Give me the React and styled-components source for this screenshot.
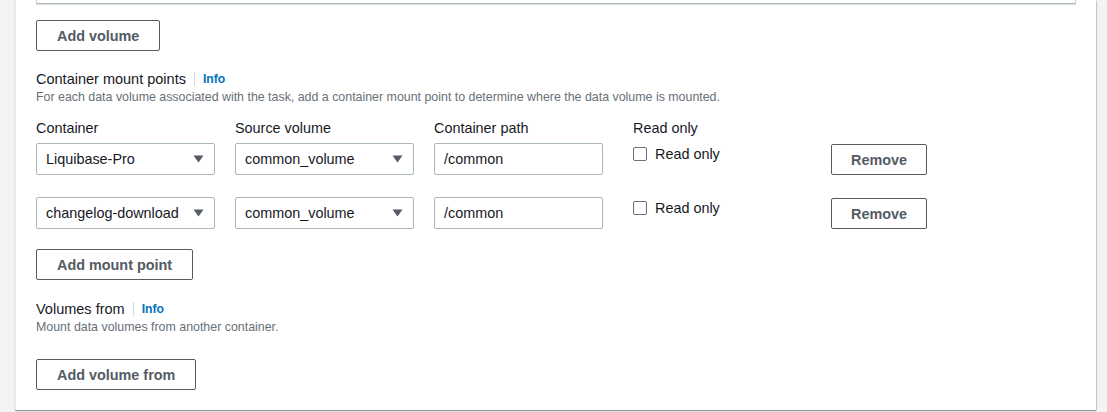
import styled, { createGlobalStyle } from "styled-components";

const GlobalStyle = createGlobalStyle`
    html, body {
        margin: 0;
        padding: 0;
        background: #f2f3f3;
        font-family: "Liberation Sans", Arial, sans-serif;
        color: #16191f;
    }
`;

const mounts = [
    { container: "Liquibase-Pro", volume: "common_volume", path: "/common" },
    { container: "changelog-download", volume: "common_volume", path: "/common" },
];

const Caret = () => (
    <svg width="11" height="8" viewBox="0 0 11 8">
        <path d="M0.5 0.5 L10.5 0.5 L5.5 7.5 Z" fill="#545b64" />
    </svg>
);

const Section = ({ title, description, top }) => (
    <Header $top={top}>
        <TitleLine>
            <Title>{title}</Title>
            <Divider />
            <Info>Info</Info>
        </TitleLine>
        <Description>{description}</Description>
    </Header>
);

const App = () => {
    return (
        <>
            <GlobalStyle />
            <Page>
                <Panel>
                    <PreviousBox />
                    <Button $top={16}>Add volume</Button>

                    <Section
                        top={18}
                        title="Container mount points"
                        description="For each data volume associated with the task, add a container mount point to determine where the data volume is mounted."
                    />

                    <LabelRow>
                        <FieldLabel>Container</FieldLabel>
                        <FieldLabel>Source volume</FieldLabel>
                        <FieldLabel>Container path</FieldLabel>
                        <FieldLabel>Read only</FieldLabel>
                    </LabelRow>

                    {mounts.map((m, i) => (
                        <MountRow key={i} $first={i === 0}>
                            <Select>
                                <span>{m.container}</span>
                                <Caret />
                            </Select>
                            <Select>
                                <span>{m.volume}</span>
                                <Caret />
                            </Select>
                            <Input>{m.path}</Input>
                            <CheckLabel>
                                <Box />
                                Read only
                            </CheckLabel>
                            <RemoveButton>Remove</RemoveButton>
                        </MountRow>
                    ))}

                    <Button $top={20}>Add mount point</Button>

                    <Section
                        top={19}
                        title="Volumes from"
                        description="Mount data volumes from another container."
                    />

                    <Button $top={23}>Add volume from</Button>
                </Panel>
            </Page>
        </>
    );
};

export default App;

const Page = styled.div`
    padding: 0 11px 1px 15px;
    width: 1107px;
    height: 412px;
    box-sizing: border-box;
`;

const Panel = styled.div`
    background: #fff;
    border-left: 1px solid #eaeded;
    padding: 0 20px 20px 20px;
    box-shadow: 0 1px 1px 0 rgba(0, 28, 36, 0.3), 1px 1px 1px 0 rgba(0, 28, 36, 0.15);
`;

const PreviousBox = styled.div`
    height: 3px;
    border: 1px solid #d5dbdb;
    border-top: none;
    border-bottom-color: #aab7b8;
    box-shadow: 0 1px 1px 0 rgba(0, 28, 36, 0.15);
`;

const Button = styled.button`
    display: block;
    margin-top: ${(p) => p.$top}px;
    height: 31px;
    padding: 0 20px;
    background: #fff;
    border: 1px solid #545b64;
    border-radius: 2px;
    color: #545b64;
    font-family: "Liberation Sans", Arial, sans-serif;
    font-size: 14.4px;
    font-weight: 700;
`;

const Header = styled.div`
    margin-top: ${(p) => p.$top}px;
`;

const TitleLine = styled.div`
    display: flex;
    align-items: center;
    height: 20px;
`;

const Title = styled.span`
    font-size: 14.5px;
    line-height: 20px;
    color: #16191f;
`;

const Divider = styled.span`
    width: 1px;
    height: 14px;
    background: #d5dbdb;
    margin: 0 8px;
`;

const Info = styled.span`
    font-size: 12.2px;
    font-weight: 700;
    color: #0073bb;
`;

const Description = styled.div`
    font-size: 12.4px;
    line-height: 17px;
    color: #687078;
`;

const LabelRow = styled.div`
    display: grid;
    grid-template-columns: 179px 179px 179px 178px auto;
    column-gap: 20px;
    margin-top: 12px;
`;

const FieldLabel = styled.div`
    font-size: 14.4px;
    line-height: 20px;
`;

const MountRow = styled.div`
    display: grid;
    grid-template-columns: 179px 179px 179px 178px auto;
    column-gap: 20px;
    align-items: start;
    margin-top: ${(p) => (p.$first ? 5 : 22)}px;
`;

const Field = styled.div`
    height: 32px;
    box-sizing: border-box;
    border: 1px solid #aab7b8;
    border-radius: 2px;
    padding: 0 9px;
    display: flex;
    align-items: center;
    font-size: 14.4px;
    color: #16191f;
`;

const Select = styled(Field)`
    justify-content: space-between;
    padding-right: 10px;
`;

const Input = styled(Field)`
    width: 169px;
`;

const CheckLabel = styled.label`
    display: flex;
    align-items: center;
    gap: 8px;
    padding-top: 1px;
    font-size: 14.4px;
    line-height: 20px;
`;

const Box = styled.span`
    width: 12px;
    height: 12px;
    border: 1px solid #687078;
    border-radius: 2px;
`;

const RemoveButton = styled.button`
    justify-self: start;
    width: 96px;
    height: 31px;
    margin-top: 1px;
    background: #fff;
    border: 1px solid #545b64;
    border-radius: 2px;
    color: #545b64;
    font-family: "Liberation Sans", Arial, sans-serif;
    font-size: 14.4px;
    font-weight: 700;
`;
